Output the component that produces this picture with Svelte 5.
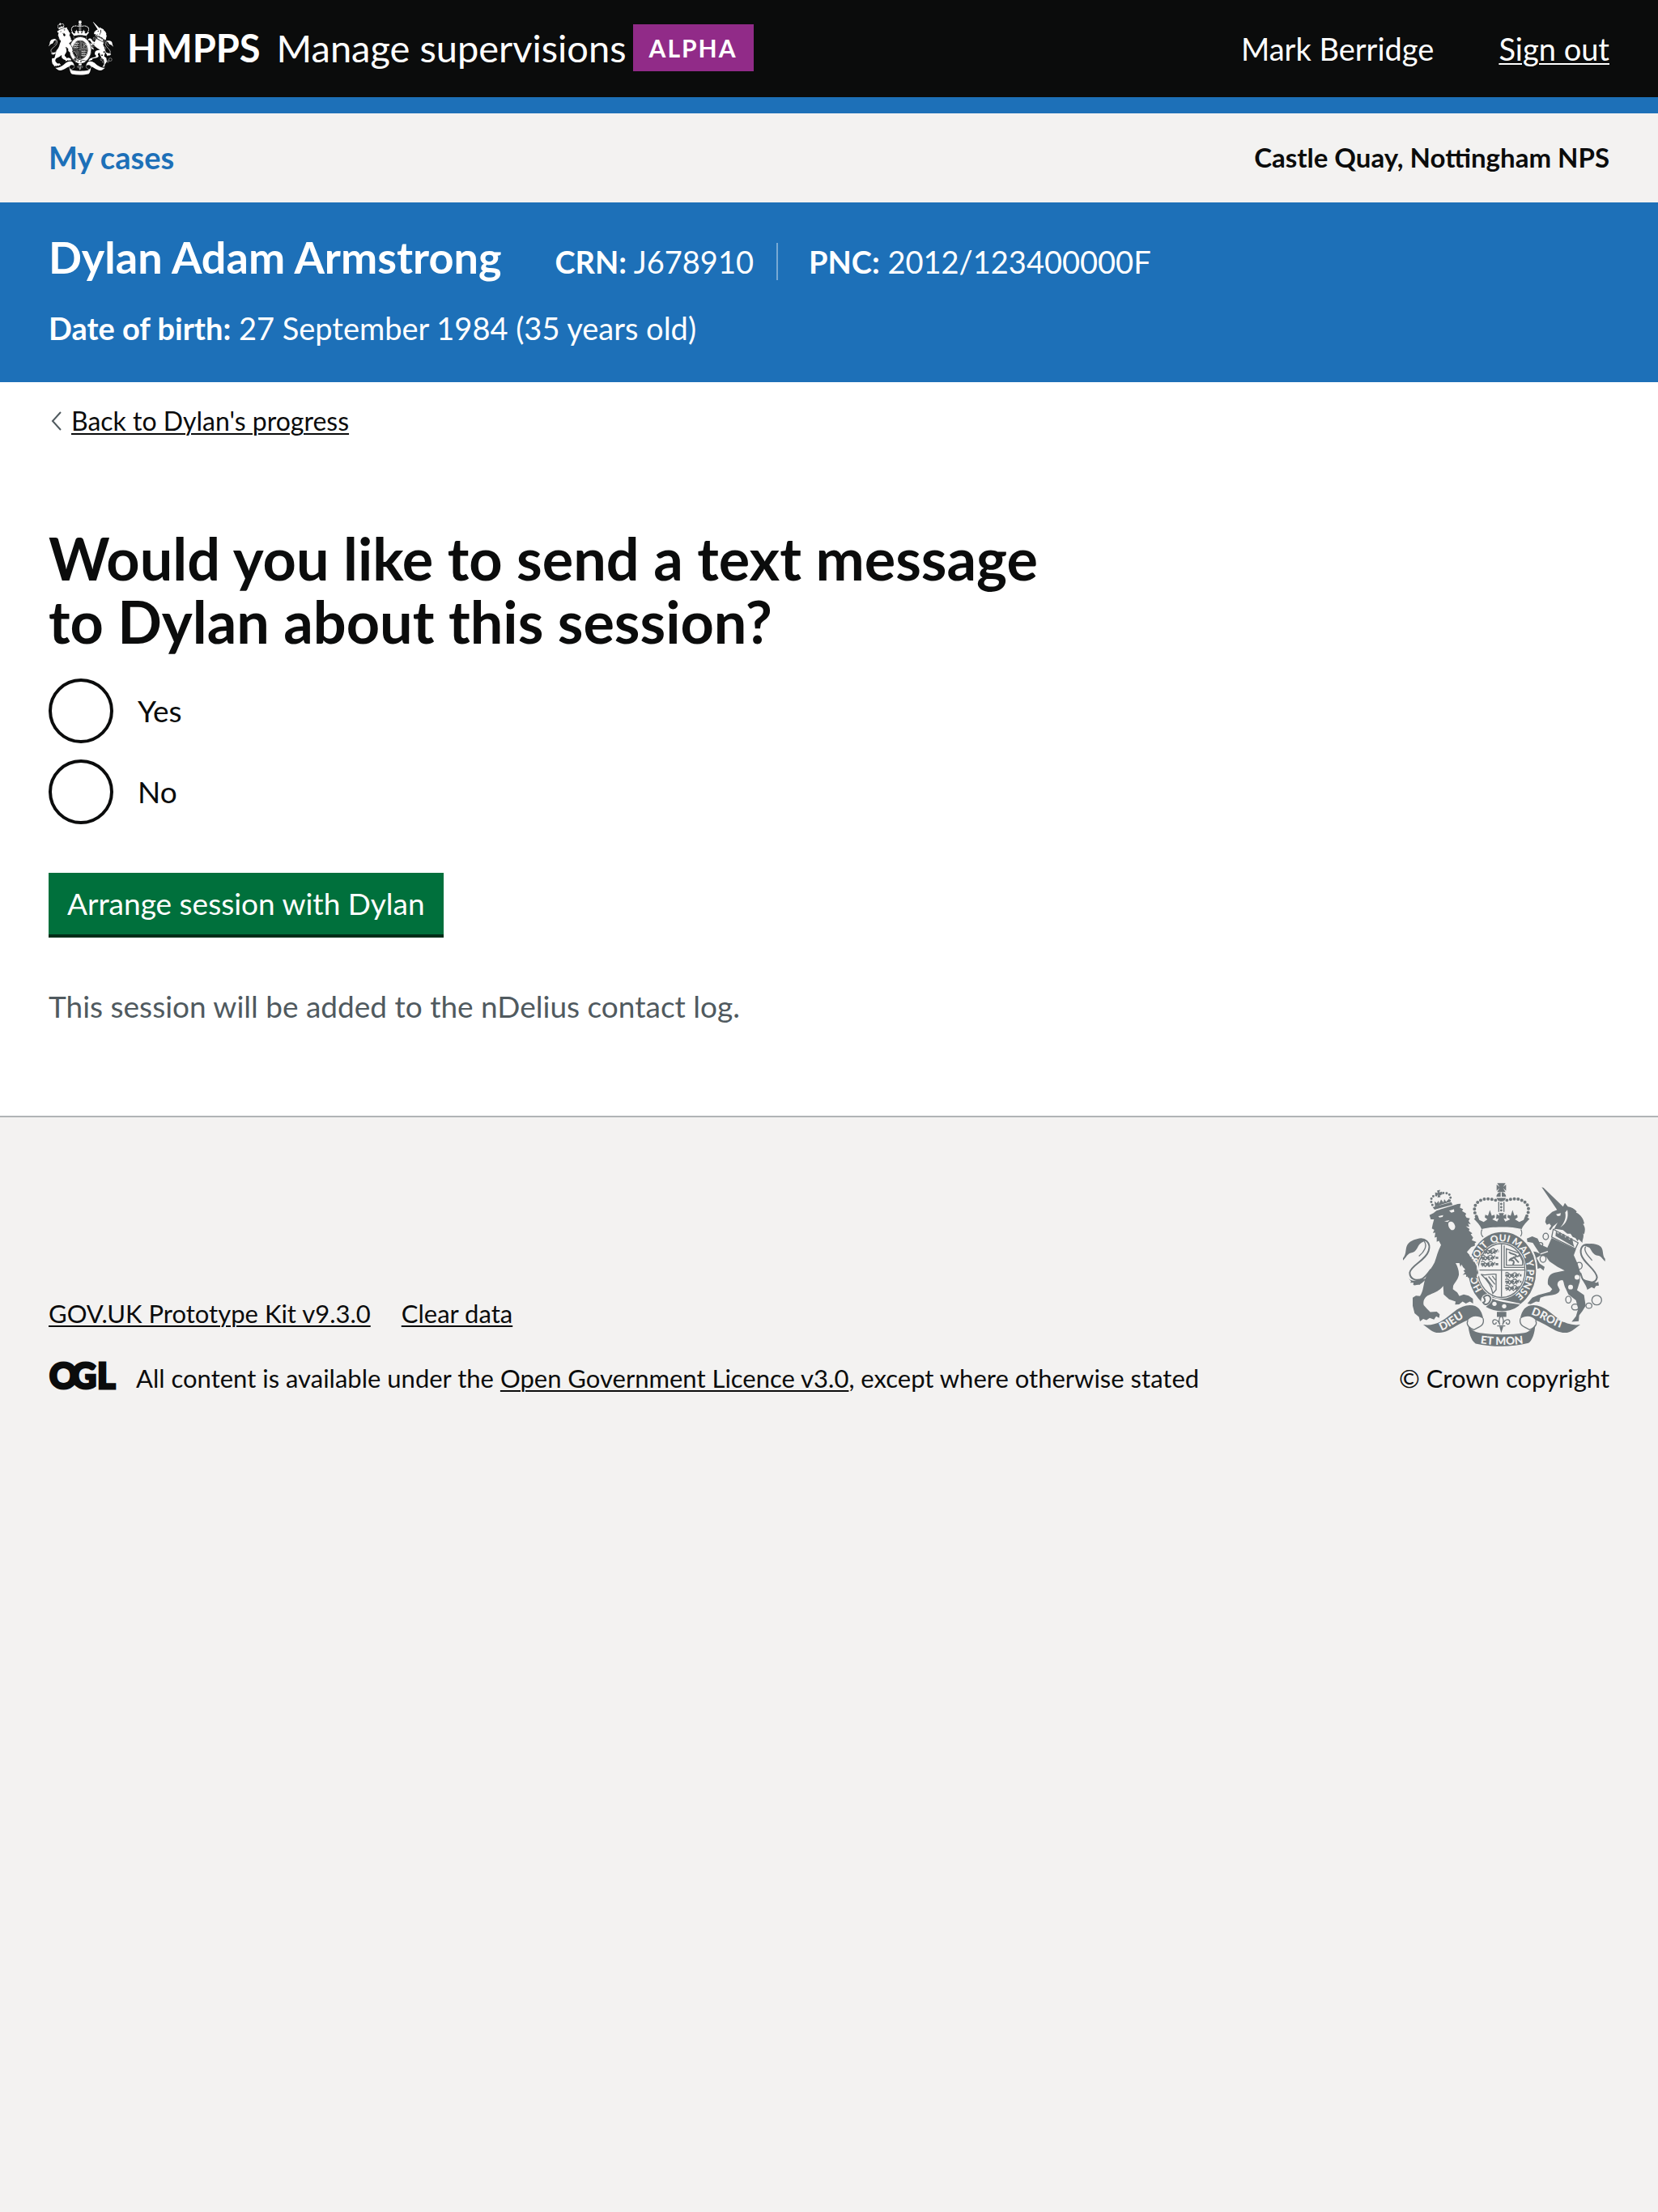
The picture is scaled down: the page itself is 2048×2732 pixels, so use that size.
<script>
  let sendText = $state('');

  const options = [
    { value: 'yes', label: 'Yes' },
    { value: 'no', label: 'No' }
  ];

  // Walking lions on the first and fourth quarters of the shield
  const lionRows = [
    [396, 316, 56], [386, 340, 64], [386, 364, 64],
    [476, 406, 60], [476, 430, 60], [476, 454, 48]
  ];
</script>

{#snippet ribbon()}
  <path d="M172 591C200 595 226 588 252 570C286 545 306 519 345 518C375 518 388 535 395 570C375 556 352 556 337 575C318 580 292 598 264 613C238 625 215 624 200 612Z" />
  <path class="line thin" d="M338 575C328 592 346 606 362 611M394 568C400 594 382 598 360 610" />
{/snippet}

{#snippet crest(motto)}
  <!-- lion crown -->
  <path d="M207 150L276 131L281 141L214 159Z" />
  <path class="dots" d="M206 142C194 120 206 102 228 106M270 126C282 104 258 88 234 102" />
  <path d="M223 88L235 85L231 95L241 92L243 103L232 101L236 112L225 114L227 103L217 106L216 95L226 97ZM216 148L214 128L222 135L229 126L231 137L238 121L247 133L250 120L257 130L268 118L272 130Z" />
  <!-- lion -->
  <path d="M195 180L210 172L221 163L300 138L311 137L308 152L320 158L316 165L331 174L328 182L333 190L345 192L340 202L348 214L338 212L343 224L330 222L344 232L341 238L354 248L348 252L357 264L352 274L369 281L362 288L366 294L350 300L334 318L352 342L366 372L371 396L367 410L375 418L360 419L352 414L340 417L345 408L330 412L333 402L318 404L327 396L321 388L329 384L320 376L314 365L310 374L306 360L292 360C300 374 305 390 304 405C300 425 286 436 283 446L282 458L298 470L306 484L322 478L340 482L356 494L357 512L345 504L330 512L318 504L305 515L290 516L292 504L268 496L248 478L246 446C236 460 220 470 188 482C176 490 170 504 174 518L186 532L198 544L222 542L233 552L231 566L220 560L212 572L196 566L184 574L172 570L160 579L156 562L140 548L133 520L133 490L145 482L160 484C174 464 172 436 182 412C190 392 204 378 214 358C222 336 226 314 238 292L230 276L222 280L222 262L214 264L217 246L208 247L213 235L204 230L207 215L212 196L200 196Z" />
  <path class="cut" d="M228 184L246 180L244 187L232 189ZM268 163L286 158L287 168L276 171ZM266 208C274 200 286 206 290 220C292 232 284 238 276 236C268 230 262 218 266 208ZM250 203L270 199L262 206Z" />
  <path d="M182 276C168 264 132 266 114 290C104 306 112 322 97 342L97 350C110 338 112 326 126 322C150 318 148 300 160 288C168 280 176 278 182 276ZM115 414C124 426 134 428 148 424C162 418 168 424 184 416C176 430 166 434 158 442C150 440 142 446 135 442L136 434L124 434L127 428Z" />
  <path class="line" d="M150 272C178 262 202 284 192 314C180 352 126 368 122 396C122 424 150 428 170 418C184 408 190 398 200 384" />
  <path class="line thin" d="M176 278C188 296 176 318 156 334" />

  <!-- unicorn -->
  <path d="M611 75L618 77L690 148L697 134L708 148C722 150 732 156 741 166L738 170C756 178 766 194 769 212L764 213C774 226 772 240 768 252L764 248C770 262 760 272 762 284L748 270L744 278L736 266L726 262L718 250L706 250L690 236L666 232L656 234L670 208L654 222L644 236L638 233L646 220L640 212L630 216L624 206L628 188L650 168L668 160Z" />
  <path class="cut" d="M664 177L682 172L680 182L670 184ZM706 160C712 190 702 212 680 226C698 206 702 186 698 170Z" />
  <path class="line thin" d="M654 233L746 284L736 306L648 262Z" />
  <path d="M662 258L664 240L672 250L680 244L684 256L694 250L698 264L710 258L712 272L724 266L728 288L732 300Z" />
  <path d="M648 266L738 308L730 330L744 362L754 396L752 430L742 462L768 480L774 520L762 540L750 556L748 578L722 580L738 560L746 532L738 500L710 478L700 456C692 440 694 430 688 424C674 424 668 434 670 444L678 460C676 470 670 476 650 480L624 484L606 490L602 506L590 504L570 514L558 512L576 490L598 480L642 468L650 458L634 440C632 416 640 400 660 396C676 392 690 390 696 388L670 374L640 354L628 337L606 332L592 340L604 362L622 374L618 388L606 378L594 382L584 364L572 348L568 314L590 318L604 324L588 300L578 284L558 280L556 268L576 260L596 268L606 290L632 302Z" />
  <path class="line cutline thin" d="M606 326L634 316" />
  <circle class="cut" cx="616" cy="344" r="12" />
  <circle class="cut" cx="742" cy="413" r="9" />
  <circle class="cut" cx="718" cy="450" r="9" />
  <g class="line thin">
    <ellipse cx="626" cy="260" rx="10" ry="12" />
    <ellipse cx="606" cy="290" rx="9" ry="7" />
    <ellipse cx="616" cy="344" rx="11" ry="13" />
    <ellipse cx="750" cy="370" rx="11" ry="13" />
    <ellipse cx="710" cy="497" rx="10" ry="13" />
    <ellipse cx="735" cy="525" rx="13" ry="11" />
    <ellipse cx="786" cy="520" rx="11" ry="10" />
    <circle cx="815" cy="499" r="18" />
  </g>
  <path d="M768 294C780 284 814 284 830 298C842 312 834 328 846 344L846 354C834 344 834 334 818 332C800 328 796 312 788 302ZM758 412C772 428 790 424 806 432C816 436 822 430 820 426L823 444L812 446L806 456L796 450L780 460C776 440 764 432 758 412Z" />
  <path class="line" d="M790 292C764 284 750 304 758 330C768 362 814 384 816 414C812 436 784 440 764 422C758 414 758 404 754 396" />
  <path class="line thin" d="M774 298C764 312 782 332 798 350" />

  <!-- royal crown -->
  <path d="M446 60L477 60L468 74L479 65L479 89L468 78L477 93L446 93L455 78L444 89L444 65L455 74Z" />
  <circle cx="461" cy="111" r="18" />
  <path class="line cutline thin" d="M442 113H480M461 93V112" />
  <path class="dots big" d="M440 124C410 114 376 118 364 146C358 164 366 184 376 194M482 124C512 114 546 118 560 146C566 164 558 184 548 194" />
  <path class="line thin" d="M452 130V168M471 130V168" />
  <path class="dots" d="M461 138V168" />
  <path d="M360 194L374 183L380 198L396 206L410 196L400 188L402 178L412 182L419 161L426 182L436 178L438 188L428 196L446 204L452 192L442 194L444 176L455 182L452 172H471L468 182L479 176L480 194L470 192L476 204L494 196L484 188L486 178L496 182L503 161L510 182L520 178L522 188L512 196L528 206L544 198L550 183L566 194C556 204 542 218 537 232C500 222 424 222 388 232C384 218 370 204 360 194Z" />
  <path class="cut" d="M390 234C430 224 494 224 534 234C540 244 538 256 530 266H396C386 256 386 244 390 234Z" />
  <path class="line thin" d="M390 234C384 246 388 258 396 264M534 234C540 246 536 258 528 264" />

  <!-- garter and shield -->
  <ellipse class="edged" cx="465" cy="390" rx="128" ry="149" />
  <ellipse class="cut" cx="462" cy="388" rx="92" ry="106" />
  <g class="line thin">
    <ellipse cx="462" cy="388" rx="87" ry="101" />
    <path d="M462 288V487M374 386H551" />
    <path d="M472 294V376H546M480 306L526 322L540 352V368H480Z" />
    <path d="M386 402C404 410 420 398 442 402V460L430 474C424 440 406 420 386 402M404 414L430 450M414 410L438 440M428 408L440 424" />
  </g>
  <path class="line" d="M490 318C498 330 512 322 518 334C510 344 498 336 490 352M506 336L526 358M496 350C506 346 512 356 504 366M520 336L532 330" />
  {#each lionRows as [x, y, w]}
    <path class="beast" d="M{x} {y}h{w}" />
    <path class="line thin" d="M{x} {y - 8}q8 -6 14 2t14 0t14 0t10 -2M{x + 4} {y + 9}l6 -7l6 7l8 -7l6 7l8 -7l6 7" />
  {/each}
  <path class="cut" d="M392 484C408 468 426 478 428 490L532 512C522 524 506 534 490 538L400 520C384 510 384 496 392 484Z" />
  <path d="M428 494C462 510 500 510 530 516C504 546 440 548 404 524C418 514 428 504 428 494Z" />
  <path class="line" d="M396 488C408 474 420 482 422 494C418 514 400 522 394 508C402 506 404 500 396 488Z" />
  <circle class="cut" cx="436" cy="513" r="8" />
  <circle class="cut" cx="472" cy="522" r="8" />

  {#if motto}
    <path id="garter-line" fill="none" d="M463 498A94 110 0 0 1 463 278A94 110 0 0 1 463 498" />
    <g class="motto">
      <text><textPath href="#garter-line" startOffset="84">HO</textPath></text>
      <text><textPath href="#garter-line" startOffset="186">SOIT</textPath></text>
      <text><textPath href="#garter-line" startOffset="281">QUI</textPath></text>
      <text><textPath href="#garter-line" startOffset="356">MAL</textPath></text>
      <text><textPath href="#garter-line" startOffset="444">Y</textPath></text>
      <text><textPath href="#garter-line" startOffset="476">PENSE</textPath></text>
    </g>
  {/if}
  <!-- paw gripping the garter -->
  <path class="line cutline" d="M338 316L358 342L374 372L380 398L372 412" />
  <path d="M318 320L340 326L358 354L370 380L374 398L366 408L372 416L358 418L350 412L340 416L330 404Z" />

  <!-- fleur-de-lis and scroll -->
  <path d="M445 543H480V562H445Z" />
  <path class="line thin" d="M461 556C450 570 452 580 456 592C448 566 426 568 430 584C434 594 444 588 442 582M461 556C472 570 470 580 466 592C474 566 496 568 492 584C488 594 478 588 480 582M446 596H476" />
  <path d="M454 598H469L461 622Z" />
  {@render ribbon()}
  <g transform="translate(926) scale(-1 1)">{@render ribbon()}</g>
  <path d="M338 592C350 612 366 620 382 622C432 630 500 630 546 622C566 618 580 604 587 590C586 622 576 652 562 660C500 676 430 676 366 662C348 650 342 622 338 592Z" />
  {#if motto}
    <path id="scroll-left" fill="none" d="M238 614C274 602 302 572 340 558" />
    <path id="scroll-right" fill="none" d="M568 552C614 562 650 602 712 610" />
    <path id="scroll-mid" fill="none" d="M360 658C430 670 496 670 566 658" />
    <g class="motto scroll">
      <text><textPath href="#scroll-left" startOffset="1">DIEU</textPath></text>
      <text><textPath href="#scroll-right" startOffset="3">DROIT</textPath></text>
      <text text-anchor="middle"><textPath href="#scroll-mid" startOffset="104">ET MON</textPath></text>
    </g>
  {/if}
{/snippet}

<div class="page">
  <header class="masthead">
    <a class="brand" href="#home">
      <svg class="crest crest-small" viewBox="94 56 756 620" preserveAspectRatio="none" aria-hidden="true">
        {@render crest(false)}
      </svg>
      <span class="org">HMPPS</span>
      <span class="product">Manage supervisions</span>
      <strong class="tag">ALPHA</strong>
    </a>
    <div class="account">
      <span>Mark Berridge</span>
      <a href="#sign-out">Sign out</a>
    </div>
  </header>

  <nav class="primary" aria-label="Primary">
    <a href="#cases">My cases</a>
    <span class="office">Castle Quay, Nottingham NPS</span>
  </nav>

  <section class="person" aria-label="Person on probation">
    <div class="person-row">
      <span class="name">Dylan Adam Armstrong</span>
      <span class="fact divided"><b>CRN:</b> J678910</span>
      <span class="fact"><b>PNC:</b> 2012/123400000F</span>
    </div>
    <div class="birth"><b>Date of birth:</b> 27 September 1984 (35 years old)</div>
  </section>

  <main>
    <div class="back">
      <svg width="14" height="24" viewBox="0 0 14 24" aria-hidden="true"><path d="M13 1L3 12L13 23" /></svg>
      <a href="#progress">Back to Dylan's progress</a>
    </div>

    <form onsubmit={(e) => e.preventDefault()}>
      <fieldset>
        <legend><h1>Would you like to send a text message to Dylan about this session?</h1></legend>
        <div class="radios">
          {#each options as option}
            <div class="radio">
              <input type="radio" id="send-{option.value}" name="send-text" value={option.value} bind:group={sendText} />
              <label for="send-{option.value}">{option.label}</label>
            </div>
          {/each}
        </div>
      </fieldset>
      <button type="submit">Arrange session with Dylan</button>
    </form>
    <p class="hint">This session will be added to the nDelius contact log.</p>
  </main>

  <footer>
    <div class="meta">
      <div class="links">
        <a href="#kit">GOV.UK Prototype Kit v9.3.0</a>
        <a href="#clear">Clear data</a>
      </div>
      <div class="licence">
        <svg class="ogl" width="82" height="36" viewBox="0 0 82 36" role="img" aria-label="Open Government Licence">
          <text x="1 28 60" y="33">OGL</text>
        </svg>
        <span>All content is available under the <a href="#licence">Open Government Licence v3.0</a>, except where otherwise stated</span>
      </div>
    </div>
    <div class="copyright">
      <svg class="crest crest-large" viewBox="94 56 756 620" preserveAspectRatio="none" aria-hidden="true">
        {@render crest(true)}
      </svg>
      <a href="#copyright">© Crown copyright</a>
    </div>
  </footer>
</div>

<style>
  :global(body) {
    background: #f3f2f1;
  }

  .page {
    font-family: Lato, "Liberation Sans", sans-serif;
    font-size: 37px;
    line-height: 50px;
    color: #0b0c0c;
  }

  a {
    color: inherit;
    text-decoration-thickness: 2px;
    text-underline-offset: 3px;
  }

  .masthead {
    display: flex;
    justify-content: space-between;
    align-items: center;
    min-height: 120px;
    padding: 0 60px;
    background: #0b0c0c;
    border-bottom: 20px solid #1d70b8;
    color: #fff;
  }

  .brand {
    display: flex;
    align-items: center;
    padding-bottom: 2px;
    text-decoration: none;
    line-height: 60px;
  }

  .org {
    margin: 0 20px 0 17px;
    font-size: 47px;
    font-weight: 700;
  }

  .product {
    font-size: 47px;
  }

  .tag {
    margin-left: 8px;
    padding: 0 20px;
    background: #912b88;
    font-size: 30px;
    line-height: 58px;
    letter-spacing: 2px;
  }

  .account {
    display: flex;
    gap: 80px;
    font-size: 38px;
  }

  .primary {
    display: flex;
    justify-content: space-between;
    align-items: center;
    padding: 34px 60px 36px;
    font-size: 38px;
    line-height: 40px;
    font-weight: 700;
  }

  .primary a {
    color: #1d70b8;
    text-decoration: none;
  }

  .office {
    font-size: 33px;
  }

  .person {
    padding: 38px 60px 42px;
    background: #1d70b8;
    color: #fff;
    font-size: 38px;
  }

  .person-row {
    display: flex;
    align-items: baseline;
    margin-bottom: 32px;
  }

  .name {
    margin-right: 66px;
    font-size: 54px;
    line-height: 60px;
    font-weight: 700;
  }

  .fact {
    line-height: 46px;
  }

  .divided {
    margin-right: 38px;
    padding-right: 28px;
    border-right: 2px solid #77a9d4;
  }

  main {
    padding: 28px 60px 110px;
    background: #fff;
  }

  .back {
    display: flex;
    align-items: center;
    gap: 12px;
    margin-bottom: 110px;
    padding-left: 2px;
    font-size: 32px;
    line-height: 40px;
  }

  .back path {
    fill: none;
    stroke: #505a5f;
    stroke-width: 2;
  }

  form {
    margin-bottom: 60px;
  }

  fieldset {
    min-width: 0;
    margin: 0 0 60px;
    padding: 0;
    border: 0;
  }

  legend {
    max-width: 66.66%;
    padding: 0;
  }

  h1 {
    margin: 0 0 32px;
    font-size: 72px;
    line-height: 78px;
    font-weight: 700;
  }

  .radios {
    display: grid;
    gap: 20px;
  }

  .radio {
    display: flex;
    align-items: center;
  }

  .radio input {
    appearance: none;
    width: 80px;
    height: 80px;
    margin: 0;
    border: 4px solid #0b0c0c;
    border-radius: 50%;
  }

  .radio input:checked {
    background: radial-gradient(#0b0c0c 20px, transparent 21px);
  }

  .radio label {
    padding: 0 30px;
  }

  button {
    display: block;
    padding: 13px 23px;
    border: 0;
    border-bottom: 4px solid #002d18;
    background: #00703c;
    color: #fff;
    font: inherit;
  }

  .hint {
    margin: 0;
    color: #505a5f;
  }

  footer {
    display: flex;
    justify-content: space-between;
    align-items: flex-end;
    padding: 80px 60px;
    border-top: 2px solid #b1b4b6;
    font-size: 31px;
    line-height: 40px;
  }

  .links {
    display: flex;
    gap: 38px;
    margin-bottom: 40px;
  }

  .licence {
    display: flex;
    gap: 26px;
  }

  .ogl {
    overflow: visible;
  }

  .ogl text {
    font-size: 43px;
    font-weight: 900;
    fill: #0b0c0c;
    stroke: #0b0c0c;
    stroke-width: 3;
  }

  .copyright {
    display: flex;
    flex-direction: column;
    align-items: center;
    gap: 18px;
  }

  .copyright a {
    text-decoration: none;
  }

  .crest {
    display: block;
    fill: var(--ink);
  }

  .crest-small {
    --ink: #fff;
    --ground: #0b0c0c;
    width: 80px;
    height: 68px;
  }

  .crest-large {
    --ink: #6f777b;
    --ground: #f3f2f1;
    width: 252px;
    height: 204px;
  }

  .cut {
    fill: var(--ground);
  }

  .edged {
    stroke: var(--ground);
    stroke-width: 6;
  }

  .line {
    fill: none;
    stroke: var(--ink);
    stroke-width: 6;
  }

  .thin {
    stroke-width: 4;
  }

  .cutline {
    stroke: var(--ground);
  }

  .dots {
    fill: none;
    stroke: var(--ink);
    stroke-width: 9;
    stroke-linecap: round;
    stroke-dasharray: 0 12;
  }

  .big {
    stroke-width: 12;
    stroke-dasharray: 0 14;
  }

  .beast {
    fill: none;
    stroke: var(--ink);
    stroke-width: 8;
    stroke-dasharray: 14 4;
  }

  .motto text {
    fill: var(--ground);
    font-size: 36px;
    font-weight: 900;
  }

  .scroll text {
    font-size: 41px;
  }
</style>
